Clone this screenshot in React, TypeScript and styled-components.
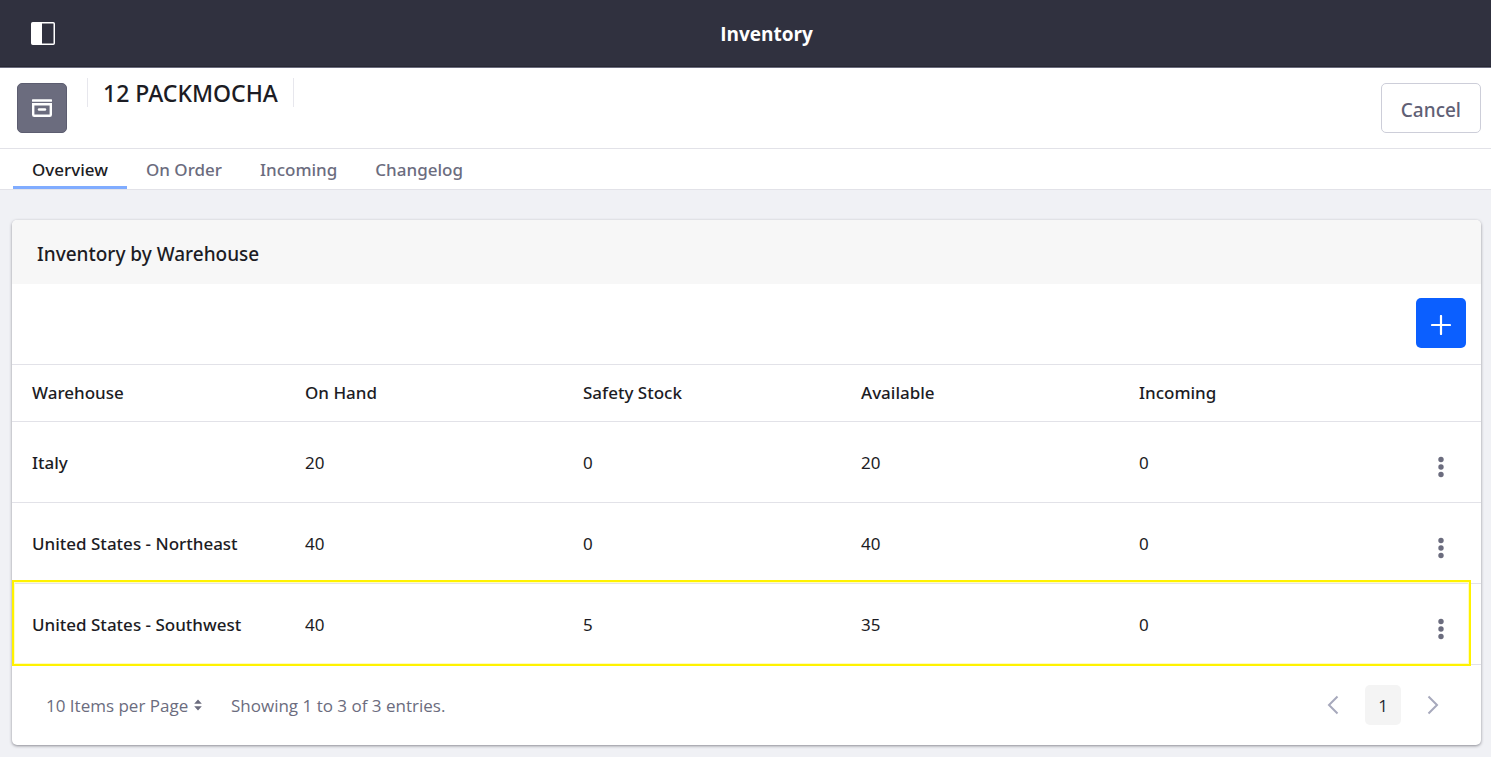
import React from 'react';
import styled, { createGlobalStyle } from 'styled-components';

const GlobalStyle = createGlobalStyle`
  *, *::before, *::after { box-sizing: border-box; }
  body {
    margin: 0;
    background: #f0f1f5;
    color: #1c1c24;
    font-family: 'Segoe UI', 'Noto Sans', 'Open Sans', sans-serif;
    font-size: 17px;
    line-height: 24px;
  }
  button, select { font: inherit; color: inherit; }
`;

const TopBar = styled.header`
  display: flex;
  align-items: center;
  height: 68px;
  padding: 0 13px 0 31px;
  background: #30313f;
  border-bottom: 1px solid #6b6c7e;
  box-shadow: inset 0 -1px 0 #272833;
`;

const PlainButton = styled.button`
  display: inline-flex;
  align-items: center;
  justify-content: center;
  padding: 0;
  border: 0;
  background: none;
  cursor: pointer;
`;

const AppTitle = styled.h1`
  flex: 1;
  margin: 0;
  color: #fff;
  font-family: 'Segoe UI', 'Open Sans', sans-serif;
  font-size: 19px;
  font-weight: 700;
  text-align: center;
`;

const ItemHeader = styled.section`
  display: flex;
  align-items: flex-start;
  gap: 20px;
  min-height: 81px;
  padding: 10px 10px 15px 17px;
  background: #fff;
  border-bottom: 1px solid #e2e2e8;
`;

const ItemIcon = styled.div`
  display: flex;
  align-items: center;
  justify-content: center;
  width: 50px;
  height: 50px;
  margin-top: 5px;
  border: 1px solid #5c5d70;
  border-radius: 5px;
  background: #6b6c7e;
`;

const ItemTitle = styled.h2`
  margin: 0 auto 0 0;
  padding: 1px 15px 0;
  border: solid #e7e7ed;
  border-width: 0 1px;
  font-size: 23px;
  font-weight: 500;
  line-height: 28px;
`;

const CancelButton = styled.button`
  height: 50px;
  margin-top: 5px;
  padding: 3px 19px 0;
  border: 1px solid #cdced9;
  border-radius: 5px;
  background: #fff;
  color: #5f6075;
  font-size: 19px;
  font-weight: 500;
  cursor: pointer;
`;

const Tabs = styled.nav`
  display: flex;
  height: 41px;
  padding: 0 13px;
  background: #fff;
  border-bottom: 1px solid #e2e2e8;
`;

const Tab = styled.a<{ $active?: boolean }>`
  padding: 9px 19px 0;
  border-bottom: 3px solid ${p => (p.$active ? '#80acff' : 'transparent')};
  color: ${p => (p.$active ? '#1c1c24' : '#6b6c7e')};
  font-weight: 500;
  text-decoration: none;
`;

const Main = styled.main`
  padding: 30px 10px 12px 12px;
`;

const Card = styled.section`
  border-radius: 5px;
  background: #fff;
  box-shadow: 0 1px 3px rgba(39, 40, 51, 0.5);
`;

const CardTitle = styled.h3`
  margin: 0;
  padding: 22px 25px 18px;
  border-radius: 5px 5px 0 0;
  background: #f7f7f7;
  font-size: 19px;
  font-weight: 500;
`;

const Toolbar = styled.div`
  display: flex;
  justify-content: flex-end;
  padding: 14px 15px 16px;
`;

const AddButton = styled(PlainButton)`
  width: 50px;
  height: 50px;
  padding-top: 3px;
  border-radius: 5px;
  background: #0b5fff;
`;

const Table = styled.table`
  width: 100%;
  border-collapse: separate;
  border-spacing: 0;
  border-top: 1px solid #e2e2e8;
  table-layout: fixed;
`;

const Row = styled.tr`
  position: relative;
`;

const HeadCell = styled.th`
  height: 57px;
  padding: 0 15px;
  border-bottom: 1px solid #e2e2e8;
  font-weight: 500;
  text-align: left;
  &:first-child { padding-left: 20px; }
  &:last-child { width: 79px; }
`;

const Cell = styled.td`
  height: 81px;
  padding: 1px 15px 0;
  border-bottom: 1px solid #e2e2e8;
`;

const NameCell = styled(Cell).attrs({ as: 'th', scope: 'row' })`
  padding-left: 20px;
  font-weight: 500;
  text-align: left;
  white-space: nowrap;
`;

const MenuCell = styled(Cell)`
  padding: 10px 17px 0 15px;
  text-align: center;
`;

const MenuButton = styled(PlainButton)`
  width: 32px;
  height: 32px;
  vertical-align: middle;
`;

const Highlight = styled.span`
  position: absolute;
  inset: -4px 10px -1px 0;
  border: 2px solid #fff200;
  box-shadow: inset 0 0 0 1px #fffcc0;
  pointer-events: none;
`;

const Footer = styled.footer`
  display: flex;
  align-items: center;
  height: 80px;
  padding: 0 30px 0 34px;
  color: #6b6c7e;
  font-family: 'Segoe UI', 'Open Sans', sans-serif;
`;

const PageSize = styled.label`
  display: flex;
  align-items: center;
  gap: 5px;
  margin-right: 29px;
`;

const PageSizeSelect = styled.select`
  padding: 2px 0 0;
  border: 0;
  appearance: none;
  background: none;
  cursor: pointer;
`;

const Summary = styled.span`
  padding-top: 2px;
`;

const Pagination = styled.nav`
  display: flex;
  align-items: center;
  gap: 14px;
  margin-left: auto;
`;

const PageButton = styled(PlainButton)<{ $current?: boolean }>`
  width: 36px;
  height: 40px;
  padding-top: ${p => (p.$current ? '2px' : '0')};
  border-radius: 5px;
  background: ${p => (p.$current ? '#f4f4f4' : 'none')};
  color: #272833;
`;

const columns = ['Warehouse', 'On Hand', 'Safety Stock', 'Available', 'Incoming'];

const stock = [
  { name: 'Italy', values: [20, 0, 20, 0] },
  { name: 'United States - Northeast', values: [40, 0, 40, 0] },
  { name: 'United States - Southwest', values: [40, 5, 35, 0], highlighted: true },
];

const Chevron = ({ d }: { d: string }) => (
  <svg width="12" height="20" viewBox="0 0 12 20" fill="none" stroke="#a7a9bc" strokeWidth="2">
    <path d={d} />
  </svg>
);

export default function App() {
  return (
    <>
      <GlobalStyle />
      <TopBar>
        <PlainButton aria-label="Toggle menu">
          <svg width="24" height="24" viewBox="0 0 24 24">
            <rect x="0.75" y="0.75" width="22.5" height="21.5" rx="1" fill="none" stroke="#fff" strokeWidth="1.5" />
            <path d="M1 1h10v21H1z" fill="#fff" />
          </svg>
        </PlainButton>
        <AppTitle>Inventory</AppTitle>
      </TopBar>
      <ItemHeader>
        <ItemIcon>
          <svg width="20" height="18" viewBox="0 0 20 18" fill="none" stroke="#fff">
            <path d="M1 1.5h18" strokeWidth="2.6" strokeLinecap="round" />
            <path d="M1.2 5.2h17.6v10.6a1 1 0 0 1-1 1H2.2a1 1 0 0 1-1-1z" strokeWidth="2.4" />
            <path d="M7 10.5h6" strokeWidth="2.4" strokeLinecap="round" />
          </svg>
        </ItemIcon>
        <ItemTitle>12 PACKMOCHA</ItemTitle>
        <CancelButton>Cancel</CancelButton>
      </ItemHeader>
      <Tabs>
        <Tab href="#overview" $active aria-current="page">Overview</Tab>
        <Tab href="#on-order">On Order</Tab>
        <Tab href="#incoming">Incoming</Tab>
        <Tab href="#changelog">Changelog</Tab>
      </Tabs>
      <Main>
        <Card>
          <CardTitle>Inventory by Warehouse</CardTitle>
          <Toolbar>
            <AddButton aria-label="Add inventory">
              <svg width="20" height="20" viewBox="0 0 20 20" stroke="#fff" strokeWidth="2.2" strokeLinecap="round">
                <path d="M10 1v18M1 10h18" />
              </svg>
            </AddButton>
          </Toolbar>
          <Table>
            <thead>
              <tr>
                {columns.map(c => <HeadCell key={c} scope="col">{c}</HeadCell>)}
                <HeadCell aria-label="Actions" />
              </tr>
            </thead>
            <tbody>
              {stock.map(row => (
                <Row key={row.name}>
                  <NameCell>
                    {row.name}
                    {row.highlighted && <Highlight />}
                  </NameCell>
                  {row.values.map((v, i) => <Cell key={i}>{v}</Cell>)}
                  <MenuCell>
                    <MenuButton aria-label={`Actions for ${row.name}`}>
                      <svg width="6" height="22" viewBox="0 0 6 22" fill="#6b6c7e">
                        <circle cx="3" cy="3.5" r="2.7" />
                        <circle cx="3" cy="11" r="2.7" />
                        <circle cx="3" cy="18.5" r="2.7" />
                      </svg>
                    </MenuButton>
                  </MenuCell>
                </Row>
              ))}
            </tbody>
          </Table>
          <Footer>
            <PageSize>
              <PageSizeSelect aria-label="Items per page" defaultValue="10">
                <option value="10">10 Items per Page</option>
                <option value="20">20 Items per Page</option>
                <option value="40">40 Items per Page</option>
              </PageSizeSelect>
              <svg width="8" height="12" viewBox="0 0 8 12" fill="#6b6c7e">
                <path d="M4 0.5 7.8 4.8H0.2zM4 11.5 0.2 7.2h7.6z" />
              </svg>
            </PageSize>
            <Summary>Showing 1 to 3 of 3 entries.</Summary>
            <Pagination aria-label="Pages">
              <PageButton aria-label="Previous page"><Chevron d="M10.5 1.5 2 10l8.5 8.5" /></PageButton>
              <PageButton $current aria-current="page">1</PageButton>
              <PageButton aria-label="Next page"><Chevron d="M1.5 1.5 10 10l-8.5 8.5" /></PageButton>
            </Pagination>
          </Footer>
        </Card>
      </Main>
    </>
  );
}
